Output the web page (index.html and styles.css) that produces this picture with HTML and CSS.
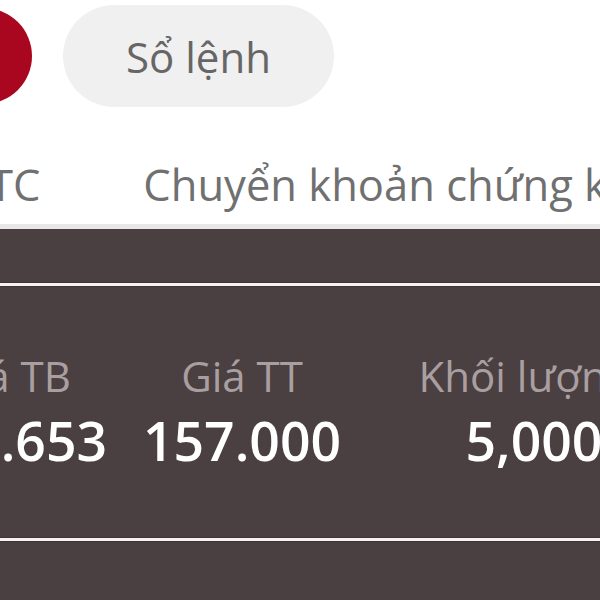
FILE: index.html
```html
<!DOCTYPE html>
<html lang="vi">
<head>
<meta charset="utf-8">
<title>Danh mục</title>
<link rel="stylesheet" href="styles.css">
</head>
<body>
<div class="screen">
  <div class="chips">
    <span class="chip-dot"></span>
    <span class="chip">Sổ lệnh</span>
  </div>
  <div class="tabs">
    <span class="tab tab-first">TC</span>
    <span class="tab">Chuyển khoản chứng khoán</span>
  </div>
  <div class="panel">
    <div class="panel-top"></div>
    <div class="rule"></div>
    <div class="stats">
      <div class="stat stat-1">
        <div class="stat-label">Giá TB</div>
        <div class="stat-value">155.653</div>
      </div>
      <div class="stat stat-2">
        <div class="stat-label">Giá TT</div>
        <div class="stat-value">157.000</div>
      </div>
      <div class="stat stat-3">
        <div class="stat-label">Khối lượng</div>
        <div class="stat-value">5,000</div>
      </div>
    </div>
    <div class="rule"></div>
    <div class="panel-bottom"></div>
  </div>
</div>
</body>
</html>
```
FILE: styles.css
```css
* { box-sizing: border-box; }
html, body {
  margin: 0;
  padding: 0;
  background: #ffffff;
}
body {
  width: 600px;
  height: 600px;
  overflow: hidden;
  font-family: "Open Sans", "Noto Sans", "Liberation Sans", sans-serif;
}
.screen {
  width: 600px;
  height: 600px;
  overflow: hidden;
  display: flex;
  flex-direction: column;
}
.chips {
  display: flex;
  align-items: center;
  height: 112px;
  flex: none;
}
.chip-dot {
  flex: none;
  width: 96px;
  height: 96px;
  border-radius: 50%;
  margin-left: -64px;
  background: #a9071f;
}
.chip {
  flex: none;
  margin-left: 31px;
  width: 271px;
  height: 102px;
  border-radius: 51px;
  background: #f0f0f0;
  color: #666666;
  font-size: 42px;
  display: flex;
  align-items: center;
  justify-content: center;
}
.tabs {
  flex: none;
  display: flex;
  gap: 103px;
  padding-top: 43px;
  height: 117px;
  white-space: nowrap;
  color: #707070;
  font-size: 43.5px;
  border-bottom: 5px solid #e9e7e7;
}
.tab-first { margin-left: -11px; }
.panel {
  flex: 1;
  background: #4a3f41;
  display: flex;
  flex-direction: column;
}
.panel-top { height: 54px; flex: none; }
.rule {
  flex: none;
  height: 3px;
  background: #f6f3f3;
  box-shadow: 0 0 1px 1px rgba(0,0,0,0.15);
}
.stats {
  flex: none;
  display: flex;
  padding-top: 61px;
  padding-bottom: 61px;
  margin-left: -110px;
  white-space: nowrap;
}
.stat { flex: none; text-align: center; }
.stat-1 { width: 236px; }
.stat-2 { width: 232px; }
.stat-3 { width: 344px; }
.stat-3 .stat-label { padding-right: 12px; }
.stat-3 .stat-value { padding-left: 8px; }
.stat-label {
  font-size: 42px;
  color: #a99fa0;
}
.stat-value {
  font-size: 53.5px;
  font-weight: 600;
  color: #ffffff;
}
.panel-bottom { flex: 1; }
```
